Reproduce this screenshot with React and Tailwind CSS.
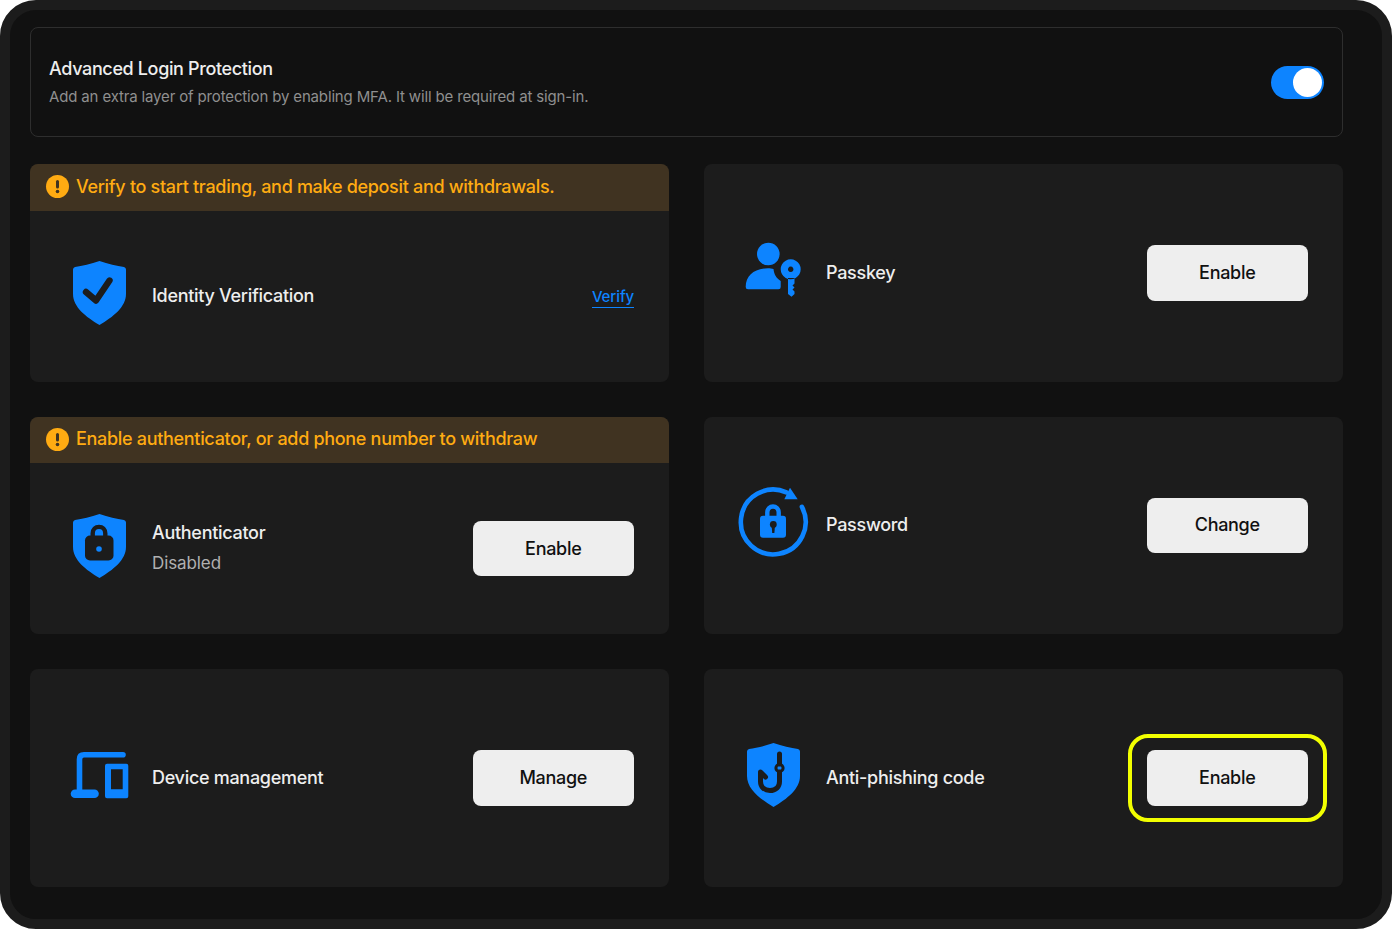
import React from 'react';

const Shield = ({ children }) => (
  <svg width="70" height="70" viewBox="-0.5 0 70 70" fill="none">
    <path
      d="M35 0C43.5 3 52.5 5 59.5 6Q61.5 6.5 61.5 8.5V33C61.5 46 48.5 56 35 64C21.5 56 8.5 46 8.5 33V8.5Q8.5 6.5 10.5 6C17.5 5 26.5 3 35 0Z"
      fill="#0d84ff"
    />
    {children}
  </svg>
);

const CheckShield = () => (
  <Shield>
    <path d="M21.5 31L31.5 39.5L45 19.5" stroke="#1c1c1c" strokeWidth="6.4" strokeLinecap="round" strokeLinejoin="round" />
  </Shield>
);

const LockShield = () => (
  <Shield>
    <path d="M28.2 24V19.5C28.2 15 31 12.9 34.5 12.9C38 12.9 40.8 15 40.8 19.5V24" stroke="#1c1c1c" strokeWidth="4.4" />
    <rect x="20.5" y="21.5" width="28.5" height="25" rx="5" fill="#1c1c1c" />
    <circle cx="34.5" cy="35" r="2.8" fill="#0d84ff" />
  </Shield>
);

const HookShield = () => (
  <Shield>
    <path d="M41 11V21" stroke="#1c1c1c" strokeWidth="5" strokeLinecap="round" />
    <circle cx="41" cy="25" r="3.6" stroke="#1c1c1c" strokeWidth="3" />
    <path d="M41 29V38.5C41 44 37 47.5 31.5 47.5C26 47.5 22 44 22 38.5V29L27 34" stroke="#1c1c1c" strokeWidth="5" strokeLinecap="round" strokeLinejoin="round" />
  </Shield>
);

const PasskeyIcon = () => (
  <svg width="70" height="70" viewBox="0 0 70 70" fill="#0d84ff">
    <circle cx="30.3" cy="16" r="11.3" />
    <path d="M10 51.3Q7.7 51.3 7.7 49C7.7 37 17 30.3 30 30.3C32 30.3 34 30.5 35.5 31C36 36 38 40 42.7 43V49Q42.7 51.3 40.5 51.3Z" />
    <path
      fillRule="evenodd"
      d="M52.7 21.3A10 10 0 1 1 52.69 21.3ZM52.7 28.6A2.7 2.7 0 1 0 52.71 28.6ZM50 40V56L53.5 58.7L56.5 56V53.5L54.5 51.5L56.5 49.5L54.5 47.5L56.5 45.5V40Z"
    />
  </svg>
);

const PasswordIcon = () => (
  <svg width="70" height="70" viewBox="0 0 70 70" fill="none" className="overflow-visible">
    <path d="M63.9 16.9A32.4 32.4 0 1 1 48.4 2.4" stroke="#0d84ff" strokeWidth="4.6" strokeLinecap="round" />
    <path d="M52 -2.3L59.7 9.3L46.3 9.3Z" fill="#0d84ff" />
    <path d="M29.3 27V22.5C29.3 18.5 32 16.5 35 16.5C38 16.5 40.7 18.5 40.7 22.5V27" stroke="#0d84ff" strokeWidth="4.4" />
    <rect x="22" y="25.7" width="26" height="22" rx="3" fill="#0d84ff" />
    <circle cx="35.3" cy="34.5" r="3.4" fill="#1c1c1c" />
    <path d="M33.6 35H37L36.4 43H34.2Z" fill="#1c1c1c" />
  </svg>
);

const DeviceIcon = () => (
  <svg width="70" height="70" viewBox="0 0 70 70" fill="none">
    <path d="M59 11.7H20Q15.5 11.7 15.5 16.2V48" stroke="#0d84ff" strokeWidth="5.6" strokeLinecap="round" />
    <path d="M11 50.7H30.5" stroke="#0d84ff" strokeWidth="8.6" strokeLinecap="round" />
    <path
      fillRule="evenodd"
      d="M43 20.7H62.3Q64.3 20.7 64.3 22.7V53.3Q64.3 55.3 62.3 55.3H43Q41 55.3 41 53.3V22.7Q41 20.7 43 20.7ZM47 26.3V46.3H58.7V26.3Z"
      fill="#0d84ff"
    />
  </svg>
);

const WarnIcon = () => (
  <span className="flex h-[23px] w-[23px] shrink-0 items-center justify-center rounded-full bg-[#ffab12]">
    <svg width="23" height="23" viewBox="0 0 23 23" fill="#403321">
      <rect x="10" y="5" width="3" height="8.5" rx="1.5" />
      <circle cx="11.5" cy="16.5" r="1.8" />
    </svg>
  </span>
);

const Button = ({ children }) => (
  <button className="flex h-[55.5px] w-[161.5px] items-center justify-center rounded-lg bg-[#eeeeee] text-lg font-[550] tracking-[-0.3px] text-[#111111]">
    {children}
  </button>
);

const Card = ({ warning, icon, title, subtitle, action }) => (
  <div className="flex h-[217.5px] flex-col overflow-hidden rounded-lg bg-[#1c1c1c]">
    {warning && (
      <div className="flex h-[46.5px] shrink-0 items-center gap-[7px] bg-[#403321] pb-px pl-4 text-lg font-[550] tracking-[-0.31px] text-[#ffab12]">
        <WarnIcon />
        {warning}
      </div>
    )}
    <div className="flex flex-1 items-center pl-[34px] pr-[35px]">
      {icon}
      <div className="ml-[18px] flex-1">
        <div className="text-lg font-[550] leading-[30px] tracking-[-0.3px] text-[#eeeeee]">{title}</div>
        {subtitle && <div className="text-[17px] leading-[31px] tracking-[-0.1px] text-[#b0b0b0]">{subtitle}</div>}
      </div>
      {action}
    </div>
  </div>
);

export default function App() {
  return (
    <div className="h-[929px] w-[1392px] bg-white font-['Inter',sans-serif]">
      <div className="h-full rounded-[36px] border-[10px] border-[#1c1c1c] bg-[#111111] pb-[33px] pl-5 pr-[39px] pt-[17px]">
        <div className="flex h-[110px] items-center justify-between rounded-lg border border-[#2e2e2e] pl-[18px] pr-[18px]">
          <div>
            <div className="pt-px text-lg font-[550] leading-7 tracking-[-0.36px] text-[#eeeeee]">Advanced Login Protection</div>
            <div className="text-[15px] leading-7 tracking-[-0.15px] text-[#8f8f8f]">
              Add an extra layer of protection by enabling MFA. It will be required at sign-in.
            </div>
          </div>
          <div className="flex h-[33px] w-[53px] items-center justify-end rounded-full bg-[#0d84ff] pr-0.5">
            <div className="h-[29px] w-[29px] rounded-full bg-white" />
          </div>
        </div>

        <div className="mt-[27px] grid grid-cols-2 gap-x-[35px] gap-y-[35px]">
          <Card
            warning="Verify to start trading, and make deposit and withdrawals."
            icon={<CheckShield />}
            title="Identity Verification"
            action={
              <a className="mt-[3px] border-b border-[#0d84ff] text-[15px] font-[550] leading-5 tracking-[-0.1px] text-[#0d84ff]">Verify</a>
            }
          />
          <Card icon={<PasskeyIcon />} title="Passkey" action={<Button>Enable</Button>} />
          <Card
            warning="Enable authenticator, or add phone number to withdraw"
            icon={<LockShield />}
            title="Authenticator"
            subtitle="Disabled"
            action={<Button>Enable</Button>}
          />
          <Card icon={<PasswordIcon />} title="Password" action={<Button>Change</Button>} />
          <Card icon={<DeviceIcon />} title="Device management" action={<Button>Manage</Button>} />
          <Card
            icon={<HookShield />}
            title="Anti-phishing code"
            action={
              <div className="relative">
                <Button>Enable</Button>
                <div className="absolute -bottom-4 -left-[18.5px] -right-[19px] -top-4 rounded-[20px] border-4 border-[#f2ff00]" />
              </div>
            }
          />
        </div>
      </div>
    </div>
  );
}
